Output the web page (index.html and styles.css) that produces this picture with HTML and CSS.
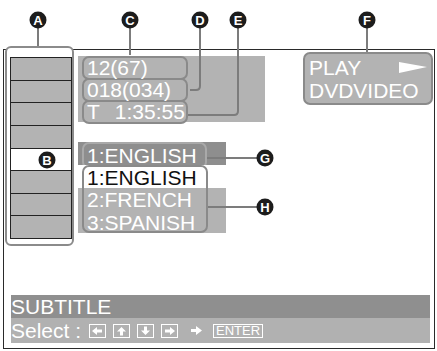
FILE: index.html
```html
<!DOCTYPE html>
<html lang="en">

<head>
    <meta charset="UTF-8">
    <meta name="viewport" content="width=device-width, initial-scale=1.0">
    <title>Subtitle menu</title>
    <link rel="stylesheet" href="styles.css">
</head>

<body>

    <div class="page">
        <div class="screen">
            <div class="top">
                <div class="bracket">
                    <div class="cells">
                        <div class="cell"></div>
                        <div class="cell"></div>
                        <div class="cell"></div>
                        <div class="cell"></div>
                        <div class="cell cell-on"></div>
                        <div class="cell"></div>
                        <div class="cell"></div>
                        <div class="cell"></div>
                    </div>
                </div>

                <div class="menu">
                    <div class="info">
                        <div class="row"><span class="tag">12(67)</span></div>
                        <div class="row"><span class="tag">018(034)</span></div>
                        <div class="row"><span class="tag">T<span class="time">1:35:55</span></span></div>
                    </div>

                    <div class="current"><span class="tag tag-g">1:ENGLISH</span></div>

                    <div class="choices">
                        <div class="choice-box">
                            <div class="choice choice-on">1:ENGLISH</div>
                            <div class="choice">2:FRENCH</div>
                            <div class="choice">3:SPANISH</div>
                        </div>
                    </div>
                </div>

                <div class="status">
                    <div class="status-line">
                        <span>PLAY</span>
                        <svg class="play" width="28" height="11" viewBox="0 0 28 11">
                            <polygon points="0,0 28,5 0,11" fill="#fff" />
                        </svg>
                    </div>
                    <div>DVDVIDEO</div>
                </div>
            </div>

            <div class="bars">
                <div class="bar-title">SUBTITLE</div>
                <div class="bar-select">
                    <span>Select :</span>
                    <span class="keys">
                        <svg class="key" width="17" height="14" viewBox="0 0 17 14">
                            <rect x="0.5" y="0.5" width="16" height="13" fill="none" stroke="#fff" />
                            <path d="M3 7 L8 3 V5.5 H13 V8.5 H8 V11 Z" fill="#fff" />
                        </svg>
                        <svg class="key" width="17" height="14" viewBox="0 0 17 14">
                            <rect x="0.5" y="0.5" width="16" height="13" fill="none" stroke="#fff" />
                            <path d="M8.5 3 L13 7.5 H10 V11.5 H7 V7.5 H4 Z" fill="#fff" />
                        </svg>
                        <svg class="key" width="17" height="14" viewBox="0 0 17 14">
                            <rect x="0.5" y="0.5" width="16" height="13" fill="none" stroke="#fff" />
                            <path d="M8.5 11 L13 6.5 H10 V2.5 H7 V6.5 H4 Z" fill="#fff" />
                        </svg>
                        <svg class="key" width="17" height="14" viewBox="0 0 17 14">
                            <rect x="0.5" y="0.5" width="16" height="13" fill="none" stroke="#fff" />
                            <path d="M14 7 L9 3 V5.5 H4 V8.5 H9 V11 Z" fill="#fff" />
                        </svg>
                    </span>
                    <svg class="then" width="11" height="9" viewBox="0 0 11 9">
                        <path d="M0 3 H5 V0 L11 4.5 L5 9 V6 H0 Z" fill="#fff" />
                    </svg>
                    <span class="enter">ENTER</span>
                </div>
            </div>
        </div>

        <!-- callout labels drawn over the screen -->
        <svg class="callouts" width="437" height="351" viewBox="0 0 437 351">
            <g fill="none" stroke="#7c7c7c" stroke-width="2">
                <path d="M38 28 V46" />
                <path d="M130 28 V55" />
                <path d="M200 28 V86 Q200 90 196 90 H190" />
                <path d="M238 28 V111 Q238 115 234 115 H188" />
                <path d="M367 28 V52" />
                <path d="M207 158 H257" />
                <path d="M208 207 H257" />
            </g>
            <g fill="#1c1c1c">
                <circle cx="38" cy="20" r="8.5" />
                <circle cx="130" cy="20" r="8.5" />
                <circle cx="200" cy="20" r="8.5" />
                <circle cx="238" cy="20" r="8.5" />
                <circle cx="367" cy="20" r="8.5" />
                <circle cx="47" cy="160" r="8.5" />
                <circle cx="265" cy="158" r="8.5" />
                <circle cx="265" cy="207" r="8.5" />
            </g>
            <g class="callout-text" fill="#fff" text-anchor="middle">
                <text x="38" y="24.5">A</text>
                <text x="130" y="24.5">C</text>
                <text x="200" y="24.5">D</text>
                <text x="238" y="24.5">E</text>
                <text x="367" y="24.5">F</text>
                <text x="47" y="164.5">B</text>
                <text x="265" y="162.5">G</text>
                <text x="265" y="211.5">H</text>
            </g>
        </svg>
    </div>

</body>

</html>
```

FILE: styles.css
```css
body {
    margin: 0;
    font-family: "Liberation Sans", Arial, sans-serif;
    background-color: #fff;
}

.page {
    position: relative;
    width: 437px;
    height: 351px;
    padding: 49px 0 0 3px;
    box-sizing: border-box;
}

.screen {
    width: 432px;
    height: 300px;
    border: 1px solid #2a2a2a;
    box-sizing: border-box;
    display: flex;
    flex-direction: column;
    font-size: 21px;
    color: #fff;
}

.top {
    display: flex;
    align-items: flex-start;
}

.bracket {
    width: 69px;
    height: 200px;
    margin: -4px 0 0 1px;
    padding: 9px 0 0 3px;
    border: 2px solid #8b8b8b;
    border-radius: 6px;
    box-sizing: border-box;
    background-color: #fff;
}

.cells {
    width: 62px;
    height: 182px;
    display: grid;
    grid-template-rows: repeat(8, 1fr);
    gap: 1px;
    background-color: #222;
    border: 1px solid #222;
    box-sizing: border-box;
}

.cell {
    background-color: #b3b3b3;
}

.cell-on {
    background-color: #fff;
}

.menu {
    width: 187px;
    margin: 7px 0 0 4px;
}

.info {
    background-color: #b3b3b3;
}

.row {
    height: 22.75px;
}

.tag {
    display: block;
    width: 106px;
    height: 24px;
    margin: -1px 0 0 4px;
    padding-left: 3px;
    border: 2px solid #8a8a8a;
    border-radius: 7px;
    box-sizing: border-box;
    line-height: 20px;
    white-space: nowrap;
}

.time {
    margin-left: 15px;
}

.current {
    width: 148px;
    height: 22.75px;
    margin-top: 22.75px;
    background-color: #8e8e8e;
}

.tag-g {
    width: 125px;
    height: 27px;
    margin-top: -3px;
    border-color: #a9a9a9;
    line-height: 23px;
}

.choices {
    width: 148px;
    height: 68.25px;
    background: linear-gradient(#fff 0 22.75px, #b3b3b3 22.75px);
}

.choice-box {
    width: 126px;
    height: 68px;
    margin-left: 4px;
    padding-left: 3px;
    border: 2px solid #8a8a8a;
    border-radius: 7px;
    box-sizing: border-box;
}

.choice {
    line-height: 22.5px;
}

.choice-on {
    color: #111;
}

.status {
    width: 130px;
    height: 53px;
    margin: 2px 1px 0 auto;
    padding: 2px 4px 0 4px;
    border: 2px solid #8a8a8a;
    border-radius: 7px;
    box-sizing: border-box;
    background-color: #b3b3b3;
    line-height: 23px;
}

.status-line {
    display: flex;
    justify-content: space-between;
    align-items: center;
}

.bars {
    margin: auto 4px 5px 7px;
}

.bar-title {
    height: 23px;
    line-height: 23px;
    background-color: #8f8f8f;
}

.bar-select {
    height: 25px;
    line-height: 25px;
    background-color: #b1b1b1;
    display: flex;
    align-items: center;
}

.keys {
    display: flex;
    gap: 7px;
    margin-left: 8px;
}

.key {
    display: block;
}

.then {
    display: block;
    margin-left: 13px;
}

.enter {
    margin-left: 11px;
    height: 14px;
    padding: 0 2px;
    border: 1px solid #fff;
    box-sizing: border-box;
    font-size: 13px;
    line-height: 12px;
}

.callouts {
    position: absolute;
    left: 0;
    top: 0;
    pointer-events: none;
}

.callout-text {
    font-family: "Liberation Sans", Arial, sans-serif;
    font-size: 13px;
    font-weight: bold;
}
```
